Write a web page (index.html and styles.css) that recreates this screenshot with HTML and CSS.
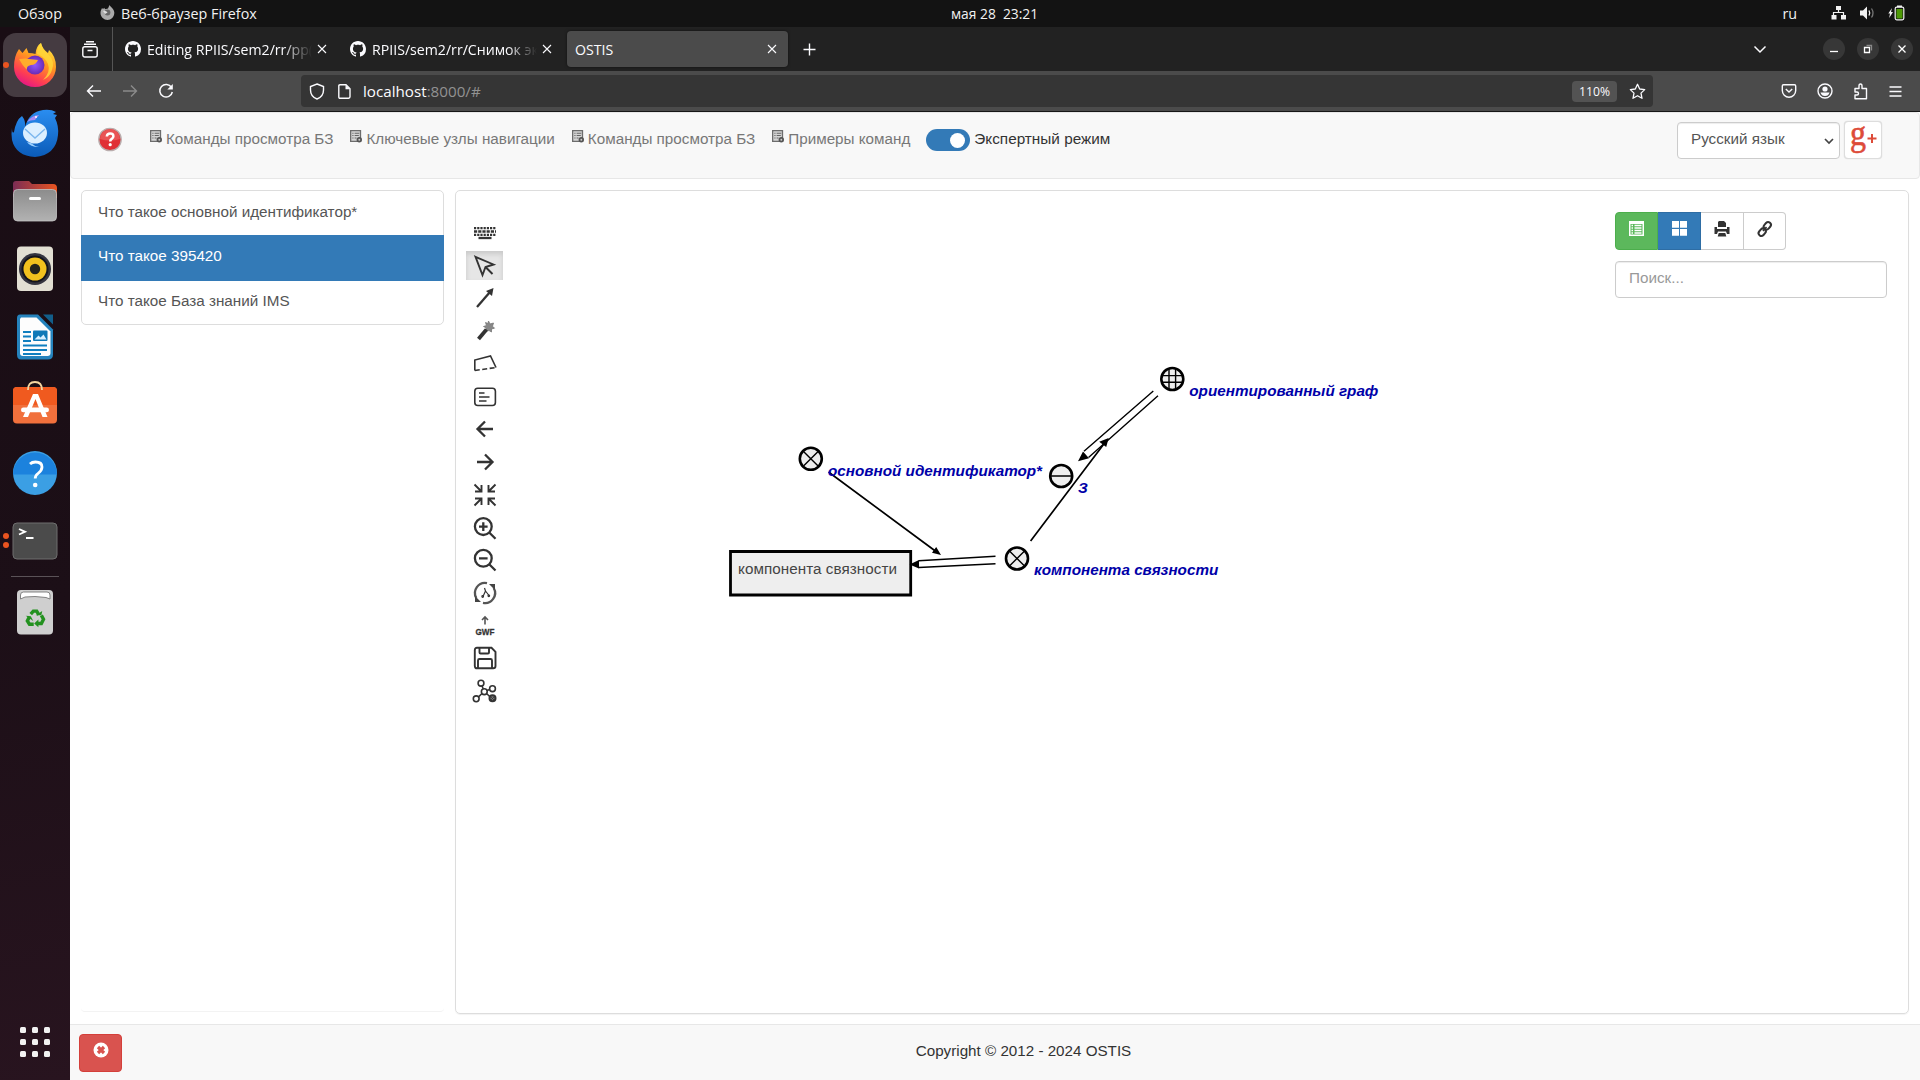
FILE: index.html
```html
<!DOCTYPE html>
<html lang="ru">
<head>
<meta charset="utf-8">
<title>OSTIS</title>
<link rel="stylesheet" href="styles.css">
</head>
<body>
<svg class="defs" width="0" height="0" aria-hidden="true">
  <symbol id="github" viewBox="0 0 16 16"><path fill="#fbfbfe" d="M8 0C3.58 0 0 3.58 0 8c0 3.54 2.29 6.53 5.47 7.59.4.07.55-.17.55-.38 0-.19-.01-.82-.01-1.49-2.01.37-2.53-.49-2.69-.94-.09-.23-.48-.94-.82-1.13-.28-.15-.68-.52-.01-.53.63-.01 1.08.58 1.23.82.72 1.21 1.87.87 2.33.66.07-.52.28-.87.51-1.07-1.78-.2-3.64-.89-3.64-3.95 0-.87.31-1.59.82-2.15-.08-.2-.36-1.02.08-2.12 0 0 .67-.21 2.2.82.64-.18 1.32-.27 2-.27s1.36.09 2 .27c1.53-1.04 2.2-.82 2.2-.82.44 1.1.16 1.92.08 2.12.51.56.82 1.27.82 2.15 0 3.07-1.87 3.75-3.65 3.95.29.25.54.73.54 1.48 0 1.07-.01 1.93-.01 2.2 0 .21.15.46.55.38A8.01 8.01 0 0 0 16 8c0-4.42-3.58-8-8-8z"/></symbol>
  <symbol id="close" viewBox="0 0 10 10"><path d="M1 1l8 8M9 1L1 9" stroke="#fbfbfe" stroke-width="1.1" fill="none"/></symbol>
  <symbol id="cmd" viewBox="0 0 14 14"><path d="M.7.7h10.600v11.600H.7z" fill="#d4d4d4" stroke="#6d6d6d" stroke-width="1.400"/><path d="M2.500 3.500h1.300M5 3.500h5M2.500 6h1.300M5 6h4.500M2.500 8.500h1.300M5 8.500h2" stroke="#666" stroke-width="1.100"/><circle cx="10" cy="10.500" r="2.900" fill="#555"/><circle cx="10" cy="10.500" r="1" fill="#ccc"/></symbol>
</svg>

<header class="topbar">
  <div class="topbar-left">
    <span>Обзор</span>
    <svg class="app-icon" width="15" height="15" viewBox="0 0 15 15"><path d="M2 3l1 1 1.300-1.200.7 1.500L8 3.500 9.500 0c1 2 4.500 3.500 4.800 7.500C14.500 12 11 15 7.500 15S.5 12 .5 8C.5 6 1.300 4.500 2 3z" fill="#aaa"/><circle cx="7.500" cy="7.500" r="2.900" fill="#666"/><path d="M3 6c2-.5 3.500.5 4.500 1.500L5 9z" fill="#ddd"/></svg>
    <span>Веб-браузер Firefox</span>
  </div>
  <div class="clock">мая 28&nbsp; 23:21</div>
  <div class="topbar-right">
    <span class="lang">ru</span>
    <svg width="16" height="14" viewBox="0 0 16 14" fill="#f2f2f2"><path d="M5 0h5v4H5zM.5 9h5v4.500h-5zM10 9h5v4.500h-5z"/><path d="M7.500 4v3M2.500 9V6.500h10V9" fill="none" stroke="#f2f2f2" stroke-width="1.200"/></svg>
    <svg width="15" height="14" viewBox="0 0 15 14"><path d="M0 4.500h3L7 .5v13l-4-4H0z" fill="#f2f2f2"/><path d="M9 4.500q1.500 2.500 0 5" stroke="#f2f2f2" fill="none" stroke-width="1.300"/><path d="M11.500 2.500q3 4.500 0 9" stroke="#777" fill="none" stroke-width="1.300"/></svg>
    <svg width="17" height="16" viewBox="0 0 17 16"><path d="M4 3L.3 8.500H2L1.200 13 5 7H3z" fill="#f2f2f2"/><path d="M9 .5h5v2H9z" fill="#f2f2f2"/><rect x="7.200" y="2.200" width="8.600" height="12.600" rx="1.500" fill="#131313" stroke="#f2f2f2" stroke-width="1.200"/><path d="M8.500 4h6v9.500h-6z" fill="#4e9a06"/></svg>
  </div>
</header>

<div class="desktop">
<aside class="dock">
  <div class="tile active"><i class="dots one"></i>
    <svg viewBox="0 0 48 48"><defs>
      <linearGradient id="ff" x1=".8" y1="0" x2=".3" y2="1"><stop offset="0" stop-color="#fff044"/><stop offset=".4" stop-color="#ff9a1f"/><stop offset=".75" stop-color="#ff4050"/><stop offset="1" stop-color="#e31587"/></linearGradient>
      <radialGradient id="ffp"><stop offset="0" stop-color="#9059ff"/><stop offset="1" stop-color="#6b2bb5"/></radialGradient></defs>
      <path d="M8 8l3.500 4 4-5 2 5q4 0 7 1Q25 5 30 2q1.500 6 7 10l1-3q7 6 7 17A21 20 0 0 1 24 46 21 20 0 0 1 3 26Q3 15 8 8z" fill="url(#ff)"/>
      <path d="M30 2q1 7 8 12 6 6 3 15-2 7-9 10 8-8 5-16-3-7-11-10 0-7 4-11z" fill="#ffd83a" opacity=".8"/>
      <circle cx="24" cy="24" r="9.500" fill="url(#ffp)"/><path d="M8 18q7-1 10 0l9 1q-2 5-7 5-5 1-4 5-5-5-8-11z" fill="#ffad2b"/></svg></div>
  <div class="tile mail"><svg viewBox="0 0 48 48"><defs><linearGradient id="tb" x1="0" y1="0" x2="0" y2="1"><stop offset="0" stop-color="#2a8df0"/><stop offset="1" stop-color="#0b5bb8"/></linearGradient></defs>
      <path d="M1 18q0 6 2 4Q5 10 11 6q4 5 3 11 4-15 18-17 8-1 13 2l-3 2 4 1-2 3q4 8 3 17-2 20-23 22Q5 46 1 30q-1-6 0-12z" fill="url(#tb)"/><path d="M16 12q5-7 12-7l-4 5q-5 0-8 2z" fill="#a98bf5"/><circle cx="25" cy="7" r="1" fill="#fff"/><ellipse cx="24" cy="23" rx="12" ry="10.500" fill="#dcefff"/><path d="M14 19l10 9 10-9" fill="none" stroke="#7cb7ee" stroke-width="1.400"/><path d="M20 33q3 3 8 4-9 0-12-5z" fill="#9cd1ff"/></svg></div>
  <div class="tile"><svg viewBox="0 0 48 48"><defs><linearGradient id="fo"><stop offset="0" stop-color="#7b2d55"/><stop offset="1" stop-color="#e95420"/></linearGradient><linearGradient id="fg" x1="0" y1="0" x2="0" y2="1"><stop offset="0" stop-color="#8c8c8c"/><stop offset="1" stop-color="#b2b2b2"/></linearGradient></defs><path d="M2 20V7q0-3 3-3h13l3 3h21q4 0 4 4v10z" fill="url(#fo)"/><rect x="2.500" y="12.500" width="43" height="31.500" rx="4" fill="url(#fg)" stroke="#c4c4c4" stroke-width=".8"/><rect x="18" y="20" width="12" height="3" rx="1.500" fill="#fff"/></svg></div>
  <div class="tile"><svg viewBox="0 0 48 48"><rect x="6" y="1.500" width="36" height="44.500" rx="4" fill="#e2dfd3"/><circle cx="24" cy="24" r="16" fill="#34343f"/><circle cx="24" cy="24" r="13.500" fill="#15151c"/><circle cx="24" cy="24" r="11.500" fill="#f2c11e"/><circle cx="24" cy="24" r="5.200" fill="#26241c"/></svg></div>
  <div class="tile"><svg viewBox="0 0 48 48"><path d="M9 1.500h18l15 15v25q0 5-5 5H10q-4 0-4-5V5q0-3.500 3-3.500z" fill="#2583bd"/><path d="M10 4.500h15.500l14 14V40q0 3-3 3H12q-3 0-3-3V6z" fill="#fdfdfd"/><path d="M32 1.500h10v10z" fill="#125e8a"/><path d="M12 19h8M12 23.500h8M12 28h8M12 32.500h24M12 37h24M12 41h18" stroke="#117fbf" stroke-width="1.900"/><rect x="22" y="17.500" width="14.500" height="10.500" rx="1" fill="#0f79b7"/><path d="M23.500 26.500l4-4 2 2 3-3 3 5z" fill="#d5efff"/></svg></div>
  <div class="tile"><svg viewBox="0 0 48 48"><rect x="2" y="6" width="44" height="36.500" rx="4" fill="#f1703c"/><path d="M2 24V10q0-4 4-4h36q4 0 4 4v14z" fill="#f05a1f"/><path d="M22 13h5l9.500 23h-5L24.500 18 17 36h-5z" fill="#fff"/><rect x="10" y="26.500" width="28" height="4.800" rx="2.400" fill="#fff"/><path d="M17 9q0-8 7-8t7 8" fill="none" stroke="#f4d6a0" stroke-width="1.800"/></svg></div>
  <div class="tile"><svg viewBox="0 0 48 48"><circle cx="24" cy="24" r="22" fill="#3b9fe4"/><path d="M2 25.500a22 22 0 1 1 44 0z" fill="#1c82dd"/><path d="M19 15q2-2 5.500-2 6.500 0 6.500 5 0 3.500-4 6.500-2.800 2.200-2.800 5" fill="none" stroke="#fff" stroke-width="2.800"/><circle cx="24.200" cy="36" r="2.300" fill="#fff"/></svg></div>
  <div class="tile"><i class="dots two"></i><svg viewBox="0 0 48 48"><rect x="2" y="6" width="44" height="36" rx="4" fill="#4b4b4b" stroke="#6e6e6e"/><path d="M8 12l6 2.800L8 17.500M15 21h7.500" fill="none" stroke="#fff" stroke-width="1.900"/></svg></div>
  <hr>
  <div class="tile"><svg viewBox="0 0 48 48"><rect x="6" y="2" width="36" height="44.500" rx="4" fill="#cfcfcf"/><path d="M9.500 11V7q0-3 3-3H36q3 0 3 3v4l-4-1.500-11-1-10 .5z" fill="#fff" stroke="#777" stroke-width=".9"/><g transform="translate(3.600 4.400) scale(.85)"><path d="M19 25.500l3-3.500h4l2.500 4.500M31.500 27l2.500 4.500-2.500 5H26M22.500 37.500h-5l-2.500-4 2.500-5" fill="none" stroke="#23911f" stroke-width="4"/><path d="M25 27h6.500l1-5zM28 32l-5 4.500 5 4.500zM13 27.500l6 .5 3 5.500z" fill="#23911f"/></g></svg></div>
  <div class="apps"><b></b><b></b><b></b><b></b><b></b><b></b><b></b><b></b><b></b></div>
</aside>

<main class="browser">
  <div class="tabs">
    <div class="recent"><svg width="16" height="17" viewBox="0 0 16 17" fill="none" stroke="#fbfbfe" stroke-width="1.400"><rect x=".8" y="5.800" width="14.400" height="10.200" rx="2"/><path d="M2 3.200h12M4 .8h8M5.500 9.500h5" /></svg></div>
    <div class="tab"><svg width="16" height="16"><use href="#github"/></svg><span class="tab-title fade">Editing RPIIS/sem2/rr/pp(</span><svg width="10" height="10"><use href="#close"/></svg></div>
    <div class="tab"><svg width="16" height="16"><use href="#github"/></svg><span class="tab-title fade">RPIIS/sem2/rr/Снимок эк</span><svg width="10" height="10"><use href="#close"/></svg></div>
    <div class="tab current"><span class="tab-title">OSTIS</span><svg width="10" height="10"><use href="#close"/></svg></div>
    <svg class="plus" width="13" height="13" viewBox="0 0 13 13"><path d="M6.500 .5v12M.5 6.500h12" stroke="#fbfbfe" stroke-width="1.400"/></svg>
    <svg class="all-tabs" width="14" height="9" viewBox="0 0 14 9"><path d="M1.500 1.500L7 7l5.500-5.500" fill="none" stroke="#fbfbfe" stroke-width="1.500"/></svg>
    <div class="win"><span><svg viewBox="0 0 22 22"><path d="M7 13.500h8"/></svg></span><span><svg viewBox="0 0 22 22"><path d="M7.500 9.500h5v5h-5z"/><path d="M9.500 7.500h5v5" stroke="#888"/></svg></span><span><svg viewBox="0 0 22 22"><path d="M7.500 7.500l7 7M14.500 7.500l-7 7"/></svg></span></div>
  </div>
  <div class="nav">
    <div class="nav-buttons">
      <svg width="16" height="14" viewBox="0 0 16 14" fill="none" stroke="#fbfbfe" stroke-width="1.400"><path d="M15 7H1.500M7 1.500L1.500 7 7 12.500"/></svg>
      <svg width="16" height="14" viewBox="0 0 16 14" fill="none" stroke="#8b8b8b" stroke-width="1.400"><path d="M1 7h13.500M9 1.500L14.500 7 9 12.500"/></svg>
      <svg width="16" height="16" viewBox="0 0 16 16" fill="none" stroke="#fbfbfe" stroke-width="1.500"><path d="M13.500 4.500a6.300 6.300 0 1 0 .8 4.500"/><path d="M14.800 1v5.500H9.300z" fill="#fbfbfe" stroke="none"/></svg>
    </div>
    <div class="urlbar">
      <svg width="16" height="17" viewBox="0 0 16 17" fill="none" stroke="#fbfbfe" stroke-width="1.400"><path d="M8 1l6.500 2.500v3.500c0 4-2.500 7.500-6.500 9-4-1.500-6.500-5-6.500-9V3.500z"/></svg>
      <svg width="13" height="15" viewBox="0 0 13 15"><path d="M2 .8h6l4 4v8q0 1.400-1.400 1.400H2Q.8 14.200.8 13V2Q.8.8 2 .8z" fill="none" stroke="#fbfbfe" stroke-width="1.400"/><path d="M7.500 1v4.300H12z" fill="#fbfbfe"/></svg>
      <div class="url">localhost<span>:8000/#</span></div>
      <div class="zoom">110%</div>
      <svg width="17" height="17" viewBox="0 0 17 17"><path d="M8.500 1.300l2.200 4.700 5 .6-3.700 3.500 1 5.200-4.500-2.600L4 15.300l1-5.200L1.300 6.600l5-.6z" fill="none" stroke="#fbfbfe" stroke-width="1.300" stroke-linejoin="round"/></svg>
    </div>
    <div class="nav-tools">
      <svg width="16" height="16" viewBox="0 0 16 16" fill="none" stroke="#fbfbfe" stroke-width="1.400"><path d="M2.500 1.800h11q1.200 0 1.200 1.200v4.500a6.700 6.700 0 0 1-13.400 0V3q0-1.200 1.200-1.200z"/><path d="M4.800 6L8 9l3.200-3"/></svg>
      <svg width="16" height="16" viewBox="0 0 16 16"><circle cx="8" cy="8" r="7" fill="none" stroke="#fbfbfe" stroke-width="1.400"/><circle cx="8" cy="6" r="2.600" fill="#fbfbfe"/><path d="M3.500 9.500h9q-1 3.500-4.500 3.500t-4.500-3.500z" fill="#fbfbfe"/></svg>
      <svg width="16" height="17" viewBox="0 0 16 17"><path d="M2 5.500h4V3q0-2 1.500-2T9 3v2.500h4.500v10.300H2V12h2q1.500 0 1.500-1.500T4 9H2z" fill="none" stroke="#fbfbfe" stroke-width="1.400" stroke-linejoin="round"/></svg>
      <svg width="13" height="11" viewBox="0 0 13 11"><path d="M.5 1h12M.5 5.500h12M.5 10h12" stroke="#fbfbfe" stroke-width="1.400"/></svg>
    </div>
  </div>

  <div class="page">
    <div class="navbar">
      <svg class="help" width="24" height="25" viewBox="0 0 24 25"><circle cx="12" cy="12.500" r="11.200" fill="#e03035" stroke="#b9adad" stroke-width="1.300"/><path d="M2 12a10 10 0 0 1 20 0q-10 3-20 0z" fill="#ef6a6a" opacity=".6"/><path d="M8.800 9.500q.3-3 3.400-3 3.200 0 3.200 2.700 0 1.500-1.700 2.700-1.500 1-1.500 2.600" fill="none" stroke="#fff" stroke-width="2.500"/><circle cx="12.200" cy="17.700" r="1.600" fill="#fff"/></svg>
      <nav class="menu">
        <a><svg width="13" height="13"><use href="#cmd"/></svg>Команды просмотра БЗ</a>
        <a><svg width="13" height="13"><use href="#cmd"/></svg>Ключевые узлы навигации</a>
        <a><svg width="13" height="13"><use href="#cmd"/></svg>Команды просмотра БЗ</a>
        <a><svg width="13" height="13"><use href="#cmd"/></svg>Примеры команд</a>
      </nav>
      <span class="toggle"></span><span class="toggle-label">Экспертный режим</span>
      <div class="select">Русский язык<svg width="10" height="7" viewBox="0 0 10 7"><path d="M1 1l4 4 4-4" fill="none" stroke="#444" stroke-width="1.700"/></svg></div>
      <div class="gplus"><svg width="36" height="36" viewBox="0 0 36 36"><text x="5" y="23" font-size="35" textLength="16" lengthAdjust="spacingAndGlyphs">g</text><path d="M22.500 16.500h9M27 12v9" stroke="#dd4b39" stroke-width="2"/></svg></div>
    </div>

    <div class="content">
      <div class="history">
        <div class="list">
          <a>Что такое основной идентификатор*</a>
          <a class="on">Что такое 395420</a>
          <a>Что такое База знаний IMS</a>
        </div>
      </div>
      <section class="panel">
        <div class="tools">
          <button><svg viewBox="0 0 22 22" class="w2"><path d="M0 6.200h22M0 12.800h22" stroke-dasharray="2.200 1"/><path d="M0 9.500h22" stroke-dasharray="3.200 1"/><path d="M4.500 16h13"/></svg></button>
          <button class="pressed"><svg viewBox="0 0 22 22"><path d="M1.500 1.800L19.500 9.500l-8 2.500-3 8z"/><path d="M11.500 12l7 7"/></svg></button>
          <button><svg viewBox="0 0 22 22" class="w2"><path d="M3 20L16 5"/><path d="M19.500 1l-1.500 8-6-5z" fill="#333" stroke="none"/></svg></button>
          <button><svg viewBox="0 0 22 22"><path d="M14.500 1l1.500 3 3.500-1-1 3.200 2 2-3 .8 0 3-2.500-1.500-2.500.5 0-3-3-1.500 3-1-1-3 2.500 1z" fill="#888" stroke="#777" stroke-width=".8"/><path d="M4.500 19L12.500 9.500" stroke-width="3.800"/></svg></button>
          <button><svg viewBox="0 0 22 22" class="w1"><path d="M.8 17.500V7l15.700-4L22 14.500"/><path d="M.8 17.500L22 14.500" stroke-dasharray="5 2.500"/></svg></button>
          <button><svg viewBox="0 0 22 22" class="w1"><rect x=".8" y="2.300" width="20.600" height="17.200" rx="3"/><path d="M5 7h5.500M5 11h10.500M5 15h7.500"/></svg></button>
          <button><svg viewBox="0 0 22 22" class="w2"><path d="M19 11H3.500M11 3.500L3.500 11 11 18.500"/></svg></button>
          <button><svg viewBox="0 0 22 22" class="w2"><path d="M3 11h15.500M11 3.500l7.500 7.500-7.500 7.500"/></svg></button>
          <button><svg viewBox="0 0 22 22"><path d="M.5.500l7 7M1 7.500h6.500V1M21.500.5l-7 7M14.500 1v6.500H21M.5 21.500l7-7M1 14.500h6.500V21M21.500 21.500l-7-7M14.500 21v-6.500H21"/></svg></button>
          <button><svg viewBox="0 0 22 22" class="w2"><circle cx="9.300" cy="9.600" r="8.400"/><path d="M9.300 5.300v8.600M5 9.600h8.600M15.200 15.500l6.300 6.300"/></svg></button>
          <button><svg viewBox="0 0 22 22" class="w2"><circle cx="9.300" cy="9.300" r="8.400"/><path d="M5 9.300h8.600M15.200 15.200l6.300 6.300"/></svg></button>
          <button><svg viewBox="0 0 22 22" class="w2 grey"><path d="M13 1.200A10 10 0 0 0 2.300 16M9 20.800A10 10 0 0 0 19.700 6"/><path d="M15 2h6v6zM7 20H1v-6z" fill="#444" stroke="none"/><g stroke="#333" stroke-width="1.200"><path d="M9 14.500l2.500-5.500-1-3M11.500 9l3.500 4.500"/><circle cx="8.700" cy="14.500" r=".8"/><circle cx="14.800" cy="13.800" r=".8"/></g></svg></button>
          <button><svg viewBox="0 0 22 22" class="w1"><path d="M11 9.500V2M8 5l3-3 3 3" stroke="#555"/><text x="1.500" y="20.200" textLength="19" lengthAdjust="spacingAndGlyphs">GWF</text></svg></button>
          <button><svg viewBox="0 0 22 22"><path d="M3 .8h14.500l4 4V19q0 2.300-2.300 2.300H3Q.8 21.300.8 19V3Q.8.800 3 .800z"/><path d="M5.500 1v4.500q0 1 1 1H14q1 0 1-1V1M4 21v-7.500q0-1.500 1.500-1.500h11q1.500 0 1.500 1.500V21"/></svg></button>
          <button><svg class="graph w1" viewBox="0 0 24 22"><circle cx="8" cy="3.200" r="2.900"/><circle cx="19.500" cy="8.700" r="2.900"/><circle cx="11.300" cy="11.700" r="2.900"/><circle cx="3.200" cy="18.800" r="2.900"/><path d="M9 6l1.300 3M14 10.500l2.700-1M9 13.500l-3.500 3.300M13.500 13.500l3.200 3"/><circle cx="19.500" cy="18.300" r="3" fill="#777" stroke-width="2"/><path d="M18 17l3 3M21 17l-3 3" stroke-width=".8"/></svg></button>
        </div>

        <svg class="graph-canvas" width="680" height="320" viewBox="720 340 680 320">
          <g class="pair">
            <path d="M995.500 556.300L918.700 560.700M995.500 563.700L918.700 567.500M1153.300 391L1084 451.300M1158 395.700L1088.500 457.500"/>
            <path d="M828.500 472L936 551.500M1030.600 541L1105 442.500" class="arc"/>
          </g>
          <path class="node box" d="M730.500 551.500h180.200v43.500H730.500z"/>
          <g class="heads"><path d="M909.500 564.500l9.500-4.500v8.500zM1078 461.200l5-9.700 6 6.700zM941 555l-9-2.300 4.200-5.800zM1108.700 438l-2.500 9-7-5.300z"/></g>
          <g class="node"><circle cx="810.800" cy="458.800" r="11"/><circle cx="1061.200" cy="476" r="11"/><circle cx="1017" cy="558.500" r="11"/><circle cx="1172.300" cy="379" r="11"/></g>
          <path class="marks" d="M803.500 451.500l14.600 14.600M818.100 451.500l-14.600 14.600M1009.700 551.200l14.600 14.600M1024.300 551.200l-14.600 14.600M1050.500 476h21.400M1169 369v20M1175.600 369v20M1162.300 375.600h20M1162.300 382.300h20"/>
          <g class="labels"><text x="828" y="476">основной идентификатор*</text><text x="1078" y="493">З</text><text x="1034" y="575">компонента связности</text><text x="1189.300" y="396">ориентированный граф</text></g>
          <text class="boxed" x="738" y="574" textLength="159">компонента связности</text>
        </svg>

        <div class="controls">
          <div class="group">
            <span class="green"><svg width="15" height="15" viewBox="0 0 15 15"><path d="M0 0h15v15H0z" fill="#fff"/><path d="M1.500 3h12v10.500h-12z" fill="#5cb85c"/><path d="M2.500 4.500H4M5.500 4.500h7M2.500 7H4M5.500 7h7M2.500 9.500H4M5.500 9.500h7M2.500 12H4M5.500 12h7" stroke="#fff" stroke-width="1.300"/></svg></span>
            <span class="blue"><svg width="15" height="15" viewBox="0 0 15 15" fill="#fff"><path d="M0 0h7v6.700H0zM8 0h7v6.700H8zM0 8h7v6.700H0zM8 8h7v6.700H8z"/></svg></span>
            <span><svg width="16" height="16" viewBox="0 0 16 16" fill="#333"><path d="M4 1l1-1h5l2 2v4H4zM.5 6H3v2h10V6h2.500v7H13l-1-2.500H4L3 13H.5zM4.700 12h6.600l1 3.500H3.700z"/></svg></span>
            <span><svg width="16" height="16" viewBox="0 0 16 16" fill="none" stroke="#333" stroke-width="2"><rect x="6.300" y="2" width="8" height="5.600" rx="2.800" transform="rotate(-48 10.300 4.800)"/><rect x="1.200" y="8.400" width="8" height="5.600" rx="2.800" transform="rotate(-48 5.200 11.200)"/><path d="M6 10l3.500-4" stroke-width="1.600"/></svg></span>
          </div>
          <div class="search">Поиск...</div>
        </div>
      </section>
    </div>

    <footer class="footer">
      <span class="clear"><svg width="16" height="16" viewBox="0 0 16 16"><circle cx="8" cy="8" r="7.500" fill="#fff"/><path d="M5 5l6 6M11 5l-6 6" stroke="#d9534f" stroke-width="3.200"/></svg></span>
      <span class="copy">Copyright © 2012 - 2024 OSTIS</span>
    </footer>
  </div>
</main>
</div>
</body>
</html>
```
FILE: styles.css
```css
* { box-sizing: border-box; }
body { margin: 0; width: 1920px; height: 1080px; overflow: hidden; display: flex; flex-direction: column; background: #fff; font-family: "Open Sans", sans-serif; }
svg { display: block; flex: none; overflow: visible; }
.defs { position: absolute; }

.topbar { height: 27px; background: #131313; color: #f2f2f2; display: grid; grid-template-columns: 863px auto 1fr; align-items: center; padding: 0 15px 0 18px; font-size: 14.3px; line-height: 27px; }
.topbar-left, .topbar-right { display: flex; align-items: center; }
.topbar-left .app-icon { margin: 0 6px 2px 38px; }
.clock { font-size: 13.8px; padding-left: 70px; }
.topbar-right { justify-content: flex-end; gap: 13px; }
.topbar-right svg { margin-top: -1px; }
.lang { margin-right: 21px; }

.desktop { flex: 1; display: flex; min-height: 0; }
.dock { width: 70px; padding: 6px 0 0; background: linear-gradient(170deg, #190d14 0%, #1c0f17 55%, #28141f 100%); display: flex; flex-direction: column; align-items: center; }
.tile { position: relative; width: 64px; height: 64px; margin-bottom: 4px; border-radius: 13px; display: flex; align-items: center; justify-content: center; flex: none; }
.tile svg { width: 48px; height: 48px; }
.tile.active { background: #453b41; }
.tile.mail { padding-top: 2px; }
.dots { position: absolute; left: 0; top: 29px; width: 6px; height: 6px; border-radius: 50%; background: #e95420; }
.dots.two { top: 24px; box-shadow: 0 9px #e95420; }
.dock hr { width: 48px; height: 1px; border: 0; background: #5a5257; margin: -1px 0 3px; flex: none; }
.apps { margin-top: auto; margin-bottom: 23px; display: grid; grid-template-columns: repeat(3, 6px); gap: 6px; }
.apps b { width: 6px; height: 6px; border-radius: 1.5px; background: #f2f2f2; }

.browser { flex: 1; display: flex; flex-direction: column; min-width: 0; }
.tabs { height: 44px; background: #222; display: flex; align-items: center; color: #fbfbfe; }
.recent { width: 43px; height: 44px; border-right: 1px solid #555; padding: 14px 0 0 12px; }
.tab { width: 221px; height: 36px; margin-left: 4px; border-radius: 4px; display: flex; align-items: center; padding: 0 11px 0 8px; font-size: 14.15px; }
.tab > svg:last-child { margin-top: 0; }
.tab-title { flex: 1; min-width: 0; overflow: hidden; white-space: nowrap; line-height: 24px; padding-top: 2px; }
.tab-title.fade { margin: 0 5px 0 6px; -webkit-mask-image: linear-gradient(to left, transparent, #000 30px); mask-image: linear-gradient(to left, transparent, #000 30px); }
.tab.current { background: #4b4b4b; box-shadow: 0 0 3px #0008; }
.plus { margin: 1px 0 0 15px; }
.all-tabs { margin-left: auto; }
.win { display: flex; gap: 12px; margin: 0 7px 0 56px; }
.win span { width: 22px; height: 22px; border-radius: 50%; background: #373737; }
.win svg { width: 22px; height: 22px; fill: none; stroke: #fff; stroke-width: 1.3; }

.nav { height: 41px; background: #4b4b4b; border-bottom: 1px solid #161616; display: flex; align-items: center; }
.nav-buttons { display: flex; gap: 20px; width: 231px; padding-left: 16px; align-items: center; }
.urlbar { width: 1352px; height: 32px; border-radius: 4px; background: #353535; display: flex; align-items: center; padding: 0 7px 0 8px; }
.urlbar > svg:nth-child(2) { margin: 0 12px 0 13px; }
.url { flex: 1; font-size: 15.2px; color: #fbfbfe; }
.url span { color: #929292; }
.zoom { width: 45px; height: 21px; border-radius: 4px; background: #535353; color: #fbfbfe; text-align: center; font-size: 12.2px; line-height: 21px; margin-right: 12px; }
.nav-tools { margin-left: auto; margin-right: 18px; display: flex; align-items: center; gap: 20px; }

.page { flex: 1; display: flex; flex-direction: column; min-height: 0; font: 15.24px/20px "Liberation Sans", Arial, sans-serif; color: #333; }
.navbar { height: 67px; background: #f8f8f8; border: 1px solid #e7e7e7; border-radius: 4px; display: flex; align-items: flex-start; padding: 8px 37px 0 27px; }
.help { margin-top: 6px; }
.menu { display: flex; gap: 17px; margin: 8px 16px 0 28px; color: #777; }
.menu a { display: flex; gap: 3px; }
.menu svg { margin-top: 1px; }
.toggle { width: 44px; height: 22px; margin: 8px 4px 0 0; border-radius: 11px; background: #337ab7; display: flex; align-items: center; justify-content: flex-end; padding-right: 5px; }
.toggle::after { content: ""; width: 15px; height: 15px; border-radius: 50%; background: #fff; }
.toggle-label { margin-top: 8px; font-size: 15.32px; }
.select { margin-left: auto; width: 163px; height: 37px; margin-top: 1px; border: 1px solid #ccc; border-radius: 4px; background: #fff; color: #555; padding: 6px 5px 0 13px; display: flex; justify-content: space-between; box-shadow: inset 0 1px 1px #00000013; }
.select svg { margin-top: 9px; }
.gplus { width: 38px; height: 38px; margin-left: 4px; border: 1px solid #ddd; border-radius: 4px; background: #fff; box-shadow: 0 0 1px #ccc; }
.gplus text { font-family: "Liberation Serif", serif; fill: #dd4b39; stroke: #dd4b39; stroke-width: .6; }

.content { height: 845px; padding: 11px 11px 10px; display: flex; gap: 11px; }
.history { width: 363px; border-bottom: 1px solid #f3f3f3; border-radius: 4px; margin-bottom: 2px; }
.list { height: 135px; border: 1px solid #ddd; border-radius: 5px; color: #555; }
.list a { display: block; height: 44px; padding: 11px 16px 0; }
.list a.on { height: 46px; margin: 0 -1px; padding-left: 17px; background: #337ab7; color: #fff; }
.list a:last-child { padding-top: 10px; }
.panel { flex: 1; border: 1px solid #ddd; border-radius: 5px; box-shadow: 0 1px 1px #0000000d; display: flex; align-items: flex-start; }
.tools { display: flex; flex-direction: column; padding: 25.6px 0 0 10px; }
.tools button { width: 37px; height: 32.74px; padding: 0; margin: 0; border: 0; background: none; display: flex; align-items: center; justify-content: center; }
.tools .pressed { height: 29px; margin: 1.87px 0; background: #e6e6e6; box-shadow: inset 0 3px 5px #00000020; }
.tools svg { width: 22px; height: 22px; fill: none; stroke: #333; stroke-width: 1.9; }
.tools svg.w1 { stroke-width: 1.6; }
.tools svg.w2 { stroke-width: 2.3; }
.tools svg.grey { stroke: #555; }
.tools .graph { width: 24px; }
.tools text { font: bold 9px "Liberation Sans", Arial, sans-serif; fill: #333; stroke: #333; stroke-width: .3; }

.graph-canvas { margin: 149px 0 0 217px; }
.pair { fill: none; stroke: #000; stroke-width: 1.4; }
.pair .arc { stroke-width: 1.7; }
.node { fill: #eee; stroke: #000; stroke-width: 2.6; }
.node.box { stroke-width: 2.8; }
.heads { fill: #000; }
.marks { stroke: #000; stroke-width: 1.4; fill: none; }
.labels text { font: italic bold 15.25px "Liberation Sans", Arial, sans-serif; fill: #0000a8; }
.boxed { font: 15.22px "Liberation Sans", Arial, sans-serif; fill: #444; }

.controls { margin: 21px 21px 0 auto; width: 272px; }
.group { display: flex; height: 38px; width: 171px; }
.group span { width: 43px; border: 1px solid #ccc; border-left-width: 0; display: flex; justify-content: center; padding-top: 8px; }
.group .green { background: #5cb85c; border: 1px solid #4cae4c; border-radius: 4px 0 0 4px; }
.group .blue { background: #337ab7; border-color: #2e6da4; }
.group span:last-child { border-radius: 0 4px 4px 0; width: 42px; }
.search { margin-top: 11px; height: 37px; border: 1px solid #ccc; border-radius: 4px; padding: 6px 13px; color: #999; box-shadow: inset 0 1px 1px #00000013; }

.footer { flex: 1; background: #f8f8f8; border-top: 1px solid #e7e7e7; display: grid; grid-template-columns: 1fr auto 1fr; align-items: start; padding: 9px 9px 0; }
.clear { width: 43px; height: 38px; border: 1px solid #d43f3a; border-radius: 4px; background: #d9534f; display: flex; justify-content: center; padding-top: 7px; }
.copy { margin-top: 7px; padding-left: 57px; font-size: 15.2px; }
```
